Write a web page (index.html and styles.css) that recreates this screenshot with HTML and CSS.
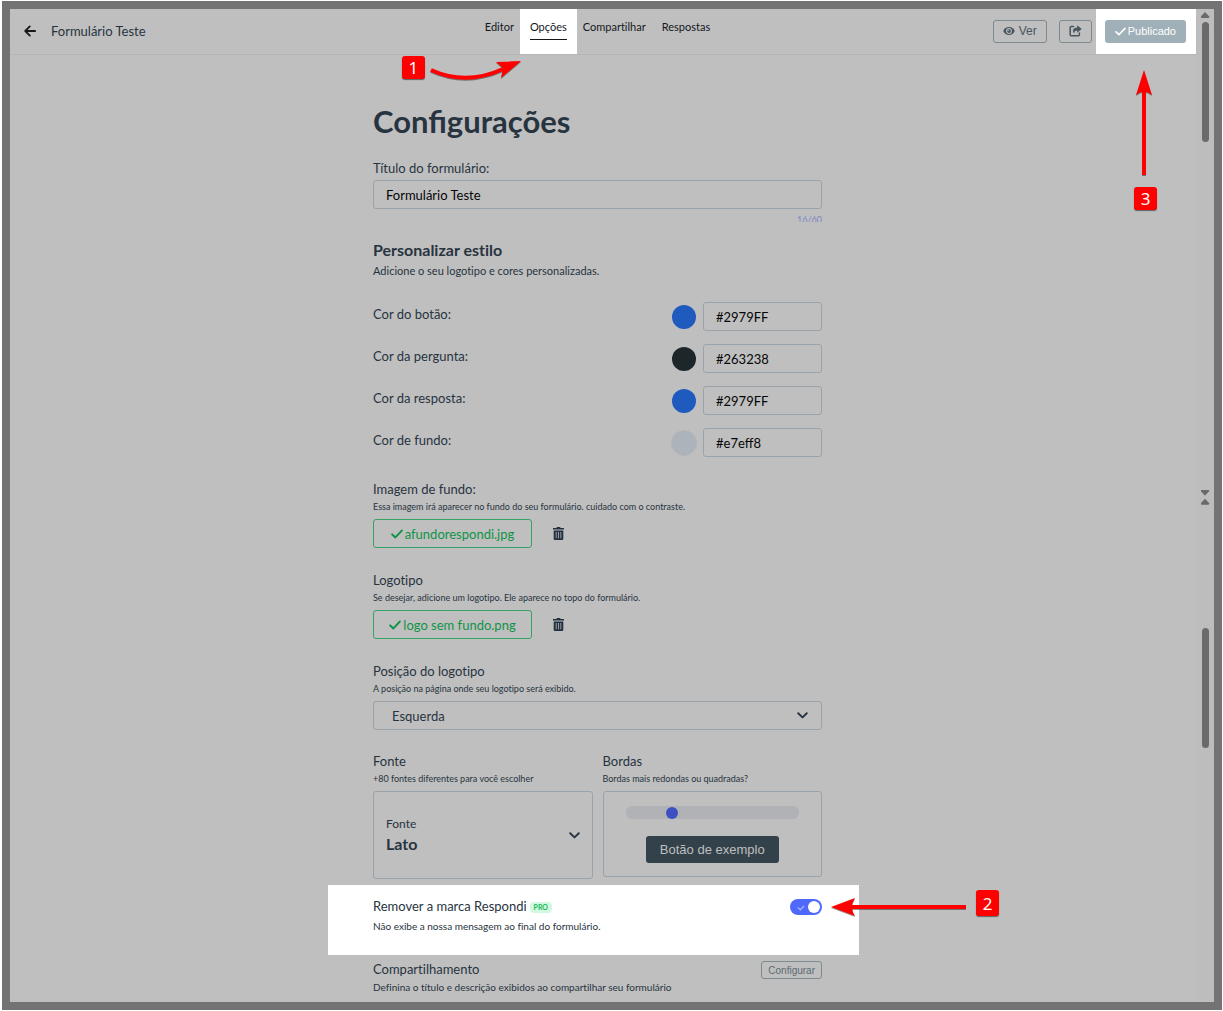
FILE: index.html
```html
<!DOCTYPE html>
<html lang="pt-BR">
<head>
    <meta charset="UTF-8">
    <meta name="viewport" content="width=device-width, initial-scale=1.0">
    <title>Configurações - Formulário Teste</title>
    <link rel="stylesheet" href="styles.css">
</head>
<body>
    <div class="frame">
        <div class="page">
            <!-- Top bar -->
            <header class="topbar">
                <div class="topbar-left">
                    <a class="back" href="#" aria-label="Voltar">
                        <svg width="12" height="12" viewBox="0 0 12 12"><path d="M11.2 6H1.2M5.8 1.4L1.2 6l4.6 4.6" fill="none" stroke="currentColor" stroke-width="1.8" stroke-linecap="round" stroke-linejoin="round"/></svg>
                    </a>
                    <span class="form-name">Formulário Teste</span>
                </div>
                <nav class="tabs">
                    <a href="#">Editor</a>
                    <div class="tab-active">
                        <a href="#">Opções</a>
                        <span class="step step-one">1</span>
                        <svg class="arrow arrow-one" width="94" height="24" viewBox="0 0 94 24"><path d="M3 11Q38 27 75 10" fill="none" stroke="#f00" stroke-width="4"/><path d="M93 2L68 3L75 9L73 19Z" fill="#f00"/></svg>
                    </div>
                    <a href="#">Compartilhar</a>
                    <a href="#">Respostas</a>
                </nav>
                <div class="topbar-right">
                    <button class="btn" type="button">
                        <svg width="12" height="10" viewBox="0 0 12 10"><path d="M6 1C3 1 1 3 .2 5 1 7 3 9 6 9s5-2 5.800-4C11 3 9 1 6 1z" fill="currentColor"/><circle cx="6" cy="5" r="2.900" fill="#bfbfbf"/><circle cx="6" cy="5" r="1.900" fill="currentColor"/><circle cx="5.200" cy="4.200" r=".8" fill="#bfbfbf"/></svg>
                        Ver
                    </button>
                    <button class="btn" type="button" aria-label="Compartilhar link">
                        <svg width="13" height="12" viewBox="0 0 13 12"><path d="M4.500 1.600H2.200a1 1 0 0 0-1 1v7.200a1 1 0 0 0 1 1h7.200a1 1 0 0 0 1-1V8" fill="none" stroke="currentColor" stroke-width="1.500" stroke-linecap="round"/><path d="M8.200.3L12.700 4 8.200 7.700V5.400C5.800 5.400 5 6.200 5.500 8.600 3 6.500 3.500 2.600 8.200 2.500z" fill="currentColor"/></svg>
                    </button>
                    <div class="publish">
                        <button class="btn-published" type="button">
                            <svg width="11" height="9" viewBox="0 0 11 9"><path d="M1 4.800L4 7.600 10 1.400" fill="none" stroke="currentColor" stroke-width="1.600" stroke-linecap="round" stroke-linejoin="round"/></svg>
                            Publicado
                        </button>
                        <svg class="arrow arrow-three" width="20" height="110" viewBox="0 0 20 110"><path d="M10 107V20" stroke="#f00" stroke-width="4"/><path d="M10 2L18 27Q10 20 2 27Z" fill="#f00"/></svg>
                        <span class="step step-three">3</span>
                    </div>
                </div>
            </header>

            <!-- Settings -->
            <main class="settings">
                <form class="column">
                    <h1>Configurações</h1>

                    <div class="field">
                        <label for="titulo">Título do formulário:</label>
                        <input class="input" id="titulo" type="text" maxlength="60" value="Formulário Teste">
                        <span class="counter">16/60</span>
                    </div>

                    <h2>Personalizar estilo</h2>
                    <p class="lead">Adicione o seu logotipo e cores personalizadas.</p>

                    <div class="colors">
                        <div class="color-row">
                            <label for="cor-botao">Cor do botão:</label>
                            <span class="swatch blue"></span>
                            <input class="input" id="cor-botao" type="text" value="#2979FF">
                        </div>
                        <div class="color-row">
                            <label for="cor-pergunta">Cor da pergunta:</label>
                            <span class="swatch dark"></span>
                            <input class="input" id="cor-pergunta" type="text" value="#263238">
                        </div>
                        <div class="color-row">
                            <label for="cor-resposta">Cor da resposta:</label>
                            <span class="swatch blue"></span>
                            <input class="input" id="cor-resposta" type="text" value="#2979FF">
                        </div>
                        <div class="color-row">
                            <label for="cor-fundo">Cor de fundo:</label>
                            <span class="swatch pale"></span>
                            <input class="input" id="cor-fundo" type="text" value="#e7eff8">
                        </div>
                    </div>

                    <div class="field">
                        <h3>Imagem de fundo:</h3>
                        <p class="hint">Essa imagem irá aparecer no fundo do seu formulário. cuidado com o contraste.</p>
                        <div class="file-row">
                            <button class="file" type="button">
                                <svg width="12" height="10" viewBox="0 0 12 10"><path d="M1.200 5.400L4.400 8.400 10.800 1.600" fill="none" stroke="currentColor" stroke-width="2" stroke-linecap="round" stroke-linejoin="round"/></svg>
                                afundorespondi.jpg
                            </button>
                            <button class="trash" type="button" aria-label="Remover imagem">
                                <svg width="11" height="13" viewBox="0 0 11 13"><path d="M0 1h3.300L4 0h3l.7 1H11v1.600H0zM.7 3.400h9.600V11.800A1.200 1.200 0 0 1 9.100 13H1.900A1.200 1.200 0 0 1 .7 11.800z" fill="currentColor"/><path d="M3.200 5v6.300M5.500 5v6.300M7.800 5v6.300" stroke="#a5a8ab" stroke-width=".9"/></svg>
                            </button>
                        </div>
                    </div>

                    <div class="field">
                        <h3>Logotipo</h3>
                        <p class="hint">Se desejar, adicione um logotipo. Ele aparece no topo do formulário.</p>
                        <div class="file-row">
                            <button class="file" type="button">
                                <svg width="12" height="10" viewBox="0 0 12 10"><path d="M1.200 5.400L4.400 8.400 10.800 1.600" fill="none" stroke="currentColor" stroke-width="2" stroke-linecap="round" stroke-linejoin="round"/></svg>
                                logo sem fundo.png
                            </button>
                            <button class="trash" type="button" aria-label="Remover logotipo">
                                <svg width="11" height="13" viewBox="0 0 11 13"><path d="M0 1h3.300L4 0h3l.7 1H11v1.600H0zM.7 3.400h9.600V11.800A1.200 1.200 0 0 1 9.100 13H1.900A1.200 1.200 0 0 1 .7 11.800z" fill="currentColor"/><path d="M3.200 5v6.300M5.500 5v6.300M7.800 5v6.300" stroke="#a5a8ab" stroke-width=".9"/></svg>
                            </button>
                        </div>
                    </div>

                    <div class="field">
                        <label for="posicao">Posição do logotipo</label>
                        <p class="hint">A posição na página onde seu logotipo será exibido.</p>
                        <div class="select-box">
                            <select id="posicao">
                                <option>Esquerda</option>
                                <option>Centro</option>
                                <option>Direita</option>
                            </select>
                            <svg width="11" height="7" viewBox="0 0 11 7"><path d="M1.200 1.200L5.500 5.400 9.800 1.200" fill="none" stroke="currentColor" stroke-width="1.900" stroke-linecap="round" stroke-linejoin="round"/></svg>
                        </div>
                    </div>

                    <div class="pair">
                        <div class="field">
                            <h3>Fonte</h3>
                            <p class="hint">+80 fontes diferentes para você escolher</p>
                            <div class="font-box">
                                <div class="font-text">
                                    <label for="fonte">Fonte</label>
                                    <select id="fonte">
                                        <option>Lato</option>
                                        <option>Roboto</option>
                                    </select>
                                </div>
                                <svg width="11" height="7" viewBox="0 0 11 7"><path d="M1.200 1.200L5.500 5.400 9.800 1.200" fill="none" stroke="currentColor" stroke-width="1.900" stroke-linecap="round" stroke-linejoin="round"/></svg>
                            </div>
                        </div>
                        <div class="field">
                            <label for="bordas">Bordas</label>
                            <p class="hint">Bordas mais redondas ou quadradas?</p>
                            <div class="border-box">
                                <input class="slider" id="bordas" type="range" min="0" max="100" value="25">
                                <button class="sample" type="button">Botão de exemplo</button>
                            </div>
                        </div>
                    </div>

                    <div class="brand">
                        <div class="brand-text">
                            <div class="brand-title">
                                <label for="marca">Remover a marca Respondi</label>
                                <span class="pro">PRO</span>
                            </div>
                            <p>Não exibe a nossa mensagem ao final do formulário.</p>
                        </div>
                        <input class="toggle" id="marca" type="checkbox" checked>
                        <svg class="arrow arrow-two" width="138" height="22" viewBox="0 0 138 22"><path d="M20 11H137" stroke="#f00" stroke-width="4"/><path d="M2 11L26 2Q20 11 26 20Z" fill="#f00"/></svg>
                        <span class="step step-two">2</span>
                    </div>

                    <div class="share">
                        <div>
                            <h3>Compartilhamento</h3>
                            <p>Definina o título e descrição exibidos ao compartilhar seu formulário</p>
                        </div>
                        <button class="btn-small" type="button">Configurar</button>
                    </div>
                </form>
            </main>
        </div>

        <!-- Scroll bars -->
        <div class="rail">
            <div class="rail-top">
                <span class="tri up"></span>
                <span class="thumb"></span>
                <span class="tri down"></span>
            </div>
            <div class="rail-bottom">
                <span class="tri up"></span>
                <span class="thumb"></span>
            </div>
        </div>
    </div>
</body>
</html>
```
FILE: styles.css
```css
/* General */
* {
    box-sizing: border-box;
}
body {
    margin: 0;
    padding: 1px 1px 2px 2px;
    background: #fff;
    color: #273440;
    font-family: Lato, sans-serif;
    font-size: 13px;
    line-height: 18px;
    font-variant-ligatures: no-common-ligatures;
}
h1, h2, h3, p {
    margin: 0;
}
h3 {
    font-size: 13px;
    font-weight: 400;
}
a {
    color: inherit;
    text-decoration: none;
}
button, input, select {
    margin: 0;
    font-family: inherit;
    cursor: pointer;
}
svg {
    flex: none;
}
.frame {
    display: grid;
    grid-template-columns: 1fr 18px;
    min-height: calc(100vh - 3px);
    border: 8px solid #737373;
    background: #bfbfbf;
}

/* Top bar */
.topbar {
    display: grid;
    grid-template-columns: 1fr auto 1fr;
    height: 46px;
    border-bottom: 1px solid #b4b5b6;
}
.topbar-left {
    display: flex;
    align-items: center;
    gap: 15px;
    padding: 0 0 1px 14px;
}
.back {
    display: flex;
    color: #17191b;
}
.tabs {
    display: flex;
    gap: 16px;
    margin-right: 11px;
    color: #14181c;
    font-size: 11px;
}
.tabs a {
    align-self: flex-start;
    margin-top: 9px;
    padding-bottom: 3px;
}
.tab-active {
    position: relative;
    display: flex;
    margin: 0 -10px;
    padding: 0 10px;
    background: #fff;
}
.tab-active a {
    border-bottom: 1px solid #14181c;
}
.topbar-right {
    display: flex;
    justify-content: flex-end;
    align-items: center;
}
.btn {
    display: flex;
    align-items: center;
    gap: 4px;
    height: 23px;
    margin: 0 12px 1px 0;
    padding: 0 9px;
    border: 1px solid #7d8a90;
    border-radius: 3px;
    background: none;
    color: #47565f;
    font: 12px "Liberation Sans", sans-serif;
}
.btn + .btn {
    margin-right: 4px;
}
.publish {
    position: relative;
    display: flex;
    align-items: center;
    height: 45px;
    padding: 0 10px 1px 9px;
    background: #fff;
}
.btn-published {
    display: flex;
    align-items: center;
    gap: 2px;
    height: 23px;
    padding: 0 10px;
    border: 0;
    border-radius: 3px;
    background: #a0b0b8;
    color: #fff;
    font: 11px "Liberation Sans", sans-serif;
}

/* Numbered steps and arrows */
.step {
    position: absolute;
    display: flex;
    align-items: center;
    justify-content: center;
    width: 23px;
    height: 23px;
    border-radius: 3px;
    background: #f00;
    box-shadow: 0 1px 1px rgba(0, 0, 0, 0.5);
    color: #fff;
    font: 17px "Noto Sans", sans-serif;
}
.arrow {
    position: absolute;
    filter: drop-shadow(0 1px 0 rgba(0, 0, 0, 0.4));
}
.step-one {
    top: 47px;
    right: 152px;
}
.arrow-one {
    top: 50px;
    right: 55px;
}
.arrow-three {
    top: 59px;
    right: 42px;
}
.step-three {
    top: 178px;
    right: 39px;
}
.arrow-two {
    top: 11px;
    left: 501px;
}
.step-two {
    top: 5px;
    left: 648px;
    height: 26px;
}

/* Settings column */
.settings {
    padding: 46px 11px 6px 0;
}
.column {
    max-width: 449px;
    margin: 0 auto;
}
h1 {
    margin-bottom: 18px;
    font-size: 31px;
    line-height: 40px;
    font-variant-ligatures: normal;
}
h2 {
    margin-top: 16px;
    font-size: 16px;
    line-height: 24px;
}
.lead {
    font-size: 11px;
}
.field label {
    display: block;
}
.hint {
    margin-bottom: 3px;
    font-size: 9px;
}
.input {
    display: block;
    width: 100%;
    height: 29px;
    margin-top: 3px;
    padding: 0 12px;
    border: 1px solid #9aa3a9;
    border-radius: 3px;
    background: none;
    color: #050607;
    font-size: 13px;
}
.counter {
    display: block;
    height: 8px;
    margin-top: 5px;
    overflow: hidden;
    color: #7f86c3;
    font-size: 9px;
    line-height: 11px;
    text-align: right;
}

/* Colours */
.colors {
    display: grid;
    gap: 13px;
    margin: 22px 0 23px;
}
.color-row {
    display: grid;
    grid-template-columns: 1fr 26px 119px;
    column-gap: 6px;
}
.color-row label {
    line-height: 24px;
}
.color-row .input {
    margin-top: 0;
}
.swatch {
    align-self: center;
    justify-self: center;
    width: 24px;
    height: 24px;
    border-radius: 50%;
}
.blue { background: #1f5bbf; }
.dark { background: #1d262a; }
.pale {
    width: 26px;
    height: 26px;
    border: 1px solid #b3b6b9;
    background: #adb3ba;
}

/* Files */
.file-row {
    display: flex;
    align-items: center;
    gap: 21px;
    margin-bottom: 23px;
}
.file {
    display: flex;
    align-items: center;
    justify-content: center;
    gap: 2px;
    width: 159px;
    height: 29px;
    padding: 0;
    border: 1px solid #34a364;
    border-radius: 3px;
    background: none;
    color: #0e9447;
    font-size: 13px;
}
.trash {
    display: flex;
    padding: 0;
    border: 0;
    background: none;
    color: #223040;
}

/* Selects */
.select-box,
.font-box {
    display: flex;
    align-items: center;
    border: 1px solid #9aa3a9;
    border-radius: 3px;
}
.select-box {
    position: relative;
    height: 29px;
    margin-bottom: 22px;
}
.select-box select {
    width: 100%;
    height: 100%;
    padding: 0 18px;
}
.select-box svg {
    position: absolute;
    right: 13px;
    pointer-events: none;
}
select {
    appearance: none;
    border: 0;
    background: none;
    color: #273440;
    font-size: 13px;
}
.pair {
    display: grid;
    grid-template-columns: 1fr 1fr;
    align-items: start;
    gap: 10px;
}
.font-box {
    height: 88px;
    padding: 0 12px;
}
.font-text {
    flex: 1;
}
.font-text label {
    font-size: 12px;
}
.font-text select {
    width: 100%;
    padding: 0;
    font-size: 16px;
    font-weight: 700;
    line-height: 22px;
}

/* Border radius slider */
.border-box {
    display: flex;
    flex-direction: column;
    align-items: center;
    gap: 17px;
    height: 86px;
    padding: 14px 22px 0;
    border: 1px solid #9aa3a9;
    border-radius: 3px;
}
.slider {
    appearance: none;
    width: 100%;
    height: 13px;
    border-radius: 6px;
    background: #b0b2b5;
}
.slider::-webkit-slider-thumb {
    appearance: none;
    width: 12px;
    height: 12px;
    border-radius: 50%;
    background: #3c50c4;
}
.sample {
    height: 27px;
    padding: 0 14px;
    border: 0;
    border-radius: 3px;
    background: #33424a;
    color: #bfbfbf;
    font: 13px "Liberation Sans", sans-serif;
}

/* Remove brand row */
.brand {
    position: relative;
    display: flex;
    justify-content: space-between;
    align-items: flex-start;
    margin: 6px -37px 0 -45px;
    padding: 12px 37px 20px 45px;
    background: #fff;
}
.brand-title {
    display: flex;
    align-items: center;
    gap: 3px;
    margin-bottom: 2px;
}
.brand p,
.share p {
    font-size: 10px;
}
.pro {
    margin-top: 3px;
    padding: 0 4px;
    border-radius: 4px;
    background: #d3f8e0;
    color: #22b85c;
    font-size: 7px;
    font-weight: 700;
    line-height: 11px;
}
.toggle {
    appearance: none;
    display: flex;
    align-items: center;
    justify-content: space-between;
    width: 32px;
    height: 16px;
    margin-top: 2px;
    padding: 0 2px 0 8px;
    border-radius: 8px;
    background: #4f69fb;
}
.toggle::before {
    content: '';
    width: 5px;
    height: 3px;
    border: solid #b9c3ff;
    border-width: 0 0 1px 1px;
    transform: rotate(-45deg);
}
.toggle::after {
    content: '';
    width: 12px;
    height: 12px;
    border-radius: 50%;
    background: #fff;
}

/* Share row */
.share {
    display: flex;
    justify-content: space-between;
    align-items: flex-start;
    padding-top: 5px;
}
.btn-small {
    height: 18px;
    margin-top: 1px;
    padding: 0 6px;
    border: 1px solid #7d8a90;
    border-radius: 3px;
    background: none;
    color: #5c6a72;
    font: 10px "Liberation Sans", sans-serif;
}

/* Scroll bars */
.rail {
    display: flex;
    flex-direction: column;
    background: #bdbdbd;
}
.rail-top,
.rail-bottom {
    display: flex;
    flex-direction: column;
    align-items: center;
    padding-top: 3px;
}
.rail-top {
    flex: 49;
}
.rail-bottom {
    flex: 51;
}
.tri {
    width: 9px;
    height: 6px;
    background: #6a6a6a;
}
.up {
    clip-path: polygon(50% 0, 100% 80%, 90% 100%, 10% 100%, 0 80%);
}
.down {
    margin-top: auto;
    clip-path: polygon(10% 0, 90% 0, 100% 20%, 50% 100%, 0 20%);
}
.thumb {
    width: 7px;
    height: 120px;
    margin-top: 4px;
    border-radius: 4px;
    background: #6a6a6a;
}
.rail-bottom .thumb {
    margin-top: 123px;
}
```
